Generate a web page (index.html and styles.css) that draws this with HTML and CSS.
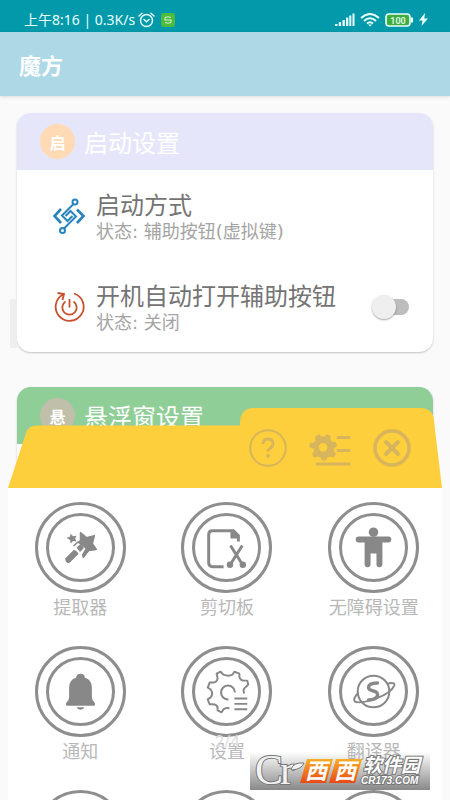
FILE: index.html
```html
<!DOCTYPE html>
<html lang="zh-CN">
<head>
<meta charset="utf-8">
<meta name="viewport" content="width=device-width, initial-scale=1">
<title>魔方</title>
<link rel="stylesheet" href="styles.css">
</head>
<body>
<div class="status-bar">
  <div class="status-left">
    <span>上午8:16 | 0.3K/s</span>
    <svg width="17" height="16" viewBox="0 0 17 16" fill="none" stroke="#e9ffff" stroke-width="1.5" stroke-linecap="round"><circle cx="8.5" cy="8.5" r="6"/><path d="M1 4 4 1.200M16 4 13 1.200M6 7.500l2.500 2.300 2.500-2.300"/></svg>
    <svg class="app-badge" width="14" height="14" viewBox="0 0 14 14"><rect width="14" height="14" rx="3" fill="#4dbb3e"/><path d="M4 4.500q3-1.500 6 0M3.500 7h7M4 9.500q3 1.500 6 0M4 4.500v2.500M10 7v2.500" fill="none" stroke="#d9f5d4"/></svg>
  </div>
  <div class="status-right">
    <svg width="20" height="14" viewBox="0 0 20 14" fill="#e9ffff"><path d="M0 11h2.500v2H0zM3.800 9h2.300v4H3.800zM7.500 7h2.300v6H7.500zM11 4.500h2.300V13H11zM14.300 2.500h2V13h-2zM17.500.500h2V13h-2z"/></svg>
    <svg width="20" height="14" viewBox="0 0 20 14" fill="none" stroke="#e9ffff" stroke-width="2"><path d="M1 5q9-8 18 0M4 8q6-5.500 12 0M7 10.500q3-2.500 6 0"/><path d="M8 11.500h4l-2 2z" fill="#e9ffff" stroke="none"/></svg>
    <svg width="29" height="14" viewBox="0 0 29 14"><rect x="1" y="1" width="24" height="12" rx="3" fill="#3fae3c" stroke="#e9ffff" stroke-width="1.600"/><path d="M27 4.500v5" stroke="#e9ffff" stroke-width="2"/><text x="13" y="10.500" class="battery-text">100</text></svg>
    <svg width="9" height="13" viewBox="0 0 9 13" fill="#e9ffff"><path d="M6 0 0 7.500h3.500L2.500 13 9 5.500H5.300z"/></svg>
  </div>
</div>
<header class="app-bar"><h1>魔方</h1></header>
<main class="content">
  <section class="card">
    <h2 class="card-head"><span class="badge">启</span>启动设置</h2>
    <div class="row">
      <svg class="row-icon" width="34" height="36" viewBox="0 0 34 36" fill="none" stroke="#2685bd" stroke-width="2"><path d="M9 11 2.500 18l6.500 7M25 11.500 31.500 18 25 25" stroke-width="2.600"/><path d="M21.500 6 10 17.500l5.500 5.500 5-5M12 30.500 24 18.500 18.500 13l-5 5"/><circle cx="23" cy="4" r="2.500"/><circle cx="10.500" cy="32.500" r="2.500"/></svg>
      <div class="row-text"><h3>启动方式</h3><p>状态: 辅助按钮(虚拟键)</p></div>
    </div>
    <div class="row">
      <svg class="row-icon" width="34" height="36" viewBox="0 0 34 36" fill="none" stroke="#c8502d" stroke-width="1.800"><path d="M22 4.500A14 14 0 1 1 11 5.500M5.500 4l6.500 1-1.500 6"/><path d="M13.500 12.500a7.200 7.200 0 1 0 8 0M17.500 10v8.500"/></svg>
      <div class="row-text"><h3><label for="autostart">开机自动打开辅助按钮</label></h3><p>状态: 关闭</p></div>
      <input class="switch" type="checkbox" id="autostart">
    </div>
  </section>
  <section class="card card-float">
    <h2 class="card-head"><span class="badge">悬</span>悬浮窗设置</h2>
    <div class="row"></div>
  </section>
</main>
<div class="edge-handle"></div>
<div class="panel">
  <div class="panel-head">
    <svg class="panel-shape" viewBox="0 0 434 80" preserveAspectRatio="none"><path d="M0 80 18 25Q20 17.500 29 17.500H232V16Q232 0 246 0H412Q423 0 425.500 9L434 80z" fill="#fecf3d"/></svg>
    <button aria-label="帮助"><svg width="38" height="38" viewBox="0 0 38 38" fill="none" stroke="#d7b55c" stroke-width="2"><circle cx="19" cy="19" r="17.800"/><path d="M14 15q0-5 5-5t5 4.500q0 3-2.500 4.500T19 22.500" stroke-width="2.800"/><circle cx="19" cy="27" r="1.900" fill="#d7b55c" stroke="none"/></svg></button>
    <button aria-label="面板设置"><svg width="44" height="38" viewBox="0 0 44 38"><path fill="#d7b55c" fill-rule="evenodd" d="m11 5 2.500 2.500h3L19 5l3.500 2 0 4 2 2 3.500 0 1 4-3 2.500v2.500l2 3.500-3 3-3.500-1-2.500 1.500-1 2.500h-4l-1.500-3-3-1-3.500 1-2-3.500 2-3-.500-2.500L1 18l1-4 4-.500 1.500-2L7 8zM15 14a4.300 4.300 0 1 0 .100 0"/><path d="M30 8.500h11M30 21.500h11M9 35h32" stroke="#d7b55c" stroke-width="3" stroke-linecap="round"/></svg></button>
    <button aria-label="关闭"><svg width="38" height="38" viewBox="0 0 38 38" fill="none" stroke="#d7b55c" stroke-width="3.500"><circle cx="19" cy="19" r="17"/><path d="m13 13 12 12M25 13 13 25" stroke-width="4" stroke-linecap="round"/></svg></button>
  </div>
  <div class="tools">
    <button class="tool"><span class="ring"><svg viewBox="0 0 92 92"><g fill="#888"><path d="m46 31 6 5 8-2-2 8 4 6-8 1-5 7-3-8-7-3 7-6z" stroke="#888" stroke-width="1.500" stroke-linejoin="round"/><path d="m36 32 2.500 2.500L42 34l-1.500 3 1.500 3-3.500-.500L36 42l-.500-3.500-3.500-2 3.500-1.500z"/><path d="M37 46l6-5 8 6-4 7-6 2z" fill="#fff"/><path d="m42 46 4-3.500 3.500 4-4 4zM30.500 57l8.500-8.500q3 0 5 4L35 61.500q-4 1-4.500-4.500z"/></g><path d="m39 44.500 5-4.500M49 54.500l5-5" stroke="#888" stroke-width="1.500"/></svg></span>提取器</button>
    <button class="tool"><span class="ring"><svg viewBox="0 0 92 92" fill="none" stroke="#888" stroke-width="3"><path d="M43 65.500H32q-4 0-4-4V33q0-4 4-4h21l5 5v6"/><path d="M50 28v9h9v-3l-6-6z" fill="#888" stroke="none"/><path d="m50 44 12 19M62 44 50 63"/><circle cx="49.500" cy="63.500" r="2.500" fill="#888" stroke-width="1.500"/><circle cx="62.500" cy="63.500" r="2.500" fill="#888" stroke-width="1.500"/></svg></span>剪切板</button>
    <button class="tool"><span class="ring"><svg viewBox="0 0 92 92" fill="#888"><circle cx="46" cy="30.500" r="4.800"/><path d="M31 35h30q3 0 3 3t-3 3h-6v22q0 3-3 3t-3-3V52h-6v11q0 3-3 3t-3-3V41h-6q-3 0-3-3t3-3z"/></svg></span>无障碍设置</button>
    <button class="tool"><span class="ring"><svg viewBox="0 0 92 92" fill="#888"><path d="M46 28q4 0 4.500 4 7 2 7 10v10q0 3 3 5.500 1 3-2 3h-25q-3 0-2-3 3-2.500 3-5.500V42q0-8 7-10 .500-4 4.500-4zM42 62h8q-1 2.500-4 2.500T42 62z"/></svg></span>通知</button>
    <button class="tool"><span class="ring"><svg viewBox="0 0 92 92" fill="none" stroke="#888" stroke-width="2"><path d="M49 63q-4-1-6 1l-2 3-4-2v-3q-1-3-5-3h-3l-2-5 3-2q3-4 0-8l-3-2 2-5h4q4-1 4-5l-1-4 4-2 3 3q5 2 9 0l2-3 5 2v3q1 4 5 4h3l1 4-3 3q-3 2-1 6" stroke-linejoin="round"/><path d="M48 54a7 7 0 1 1 6.500-7"/><path d="M54 53h13M54 58.500h13M54 64h13"/></svg></span>设置</button>
    <button class="tool"><span class="ring"><svg viewBox="0 0 92 92" fill="none" stroke="#888" stroke-width="2"><circle cx="46" cy="46" r="16"/><path d="M60 38q8-2 7 2-3 7-18 13-17 6-22 3-2-3 4-9"/><path d="M50 37.500q-9 0-9 4.500 0 2.500 5 3.500t4 5q-2 4-9 4" stroke-width="3.500" stroke-linecap="round"/></svg></span>翻译器</button>
    <button class="tool" aria-label="更多"><span class="ring"></span></button>
    <button class="tool" aria-label="更多"><span class="ring"></span></button>
    <button class="tool" aria-label="更多"><span class="ring"></span></button>
  </div>
  <span class="page-count">2/4</span>
</div>
<div class="watermark">
  <svg width="180" height="38" viewBox="0 0 180 38">
    <defs><linearGradient id="orange" x2="0" y2="1"><stop stop-color="#f9ae24"/><stop offset="1" stop-color="#e84915"/></linearGradient></defs>
    <text x="5" y="32" class="mark-cr">C</text><text x="30" y="32" class="mark-cr">r</text>
    <path d="M41 17q3-7 13-6-2 6-12 7z" fill="#f2f2f2" stroke="#777"/>
    <path d="M57 7h26l-7 24H50zM86 7h26l-7 24H79z" fill="url(#orange)"/>
    <text x="55" y="27" class="mark-xx">西</text><text x="84" y="27" class="mark-xx">西</text>
    <text x="113" y="20" class="mark-name">软件园</text>
    <text x="111" y="32" class="mark-url">CR173.COM</text>
  </svg>
</div>
</body>
</html>
```
FILE: styles.css
```css
* { box-sizing: border-box; margin: 0; }
body {
  position: relative;
  height: 100vh;
  overflow: hidden;
  background: #fafafa;
  font-family: "Noto Sans CJK SC", sans-serif;
  color: #777;
}
button { border: 0; padding: 0; background: none; font: inherit; color: inherit; }
svg { display: block; flex: none; }

.status-bar {
  display: flex;
  justify-content: space-between;
  height: 32px;
  padding: 7px 22px 0 24px;
  background: #0299aa;
  color: #e9ffff;
}
.status-left, .status-right { display: flex; align-items: center; height: 25px; }
.status-left { gap: 3px; font: 14px/25px "Noto Sans", "Noto Sans CJK SC", sans-serif; }
.app-badge { margin-left: 3px; }
.status-right { gap: 5px; }
.battery-text { font: 500 9px Roboto, sans-serif; fill: #e9ffff; text-anchor: middle; }

.app-bar {
  display: flex;
  align-items: center;
  height: 64px;
  padding: 0 19px;
  background: #add8e6;
  box-shadow: 0 1px 3px rgba(0, 0, 0, .12);
}
.app-bar h1 { font-size: 22px; font-weight: 700; color: #fff; }

.content { display: flex; flex-direction: column; gap: 35px; padding: 17px; }
.card {
  border-radius: 14px;
  background: #fff;
  overflow: hidden;
  box-shadow: 0 1px 2px rgba(0, 0, 0, .22);
}
.card-head {
  display: flex;
  align-items: center;
  gap: 9px;
  height: 57px;
  padding-left: 23px;
  background: #e6e6fa;
  font-size: 24px;
  font-weight: 400;
  color: #fff;
}
.badge {
  display: grid;
  place-items: center;
  width: 35px;
  height: 35px;
  border-radius: 50%;
  background: #ffdab5;
  font-size: 16px;
  font-weight: 700;
}
.card-float .card-head { background: #90ce98; }
.card-float .badge { background: #bfbfaa; }
.row { display: flex; align-items: center; gap: 10px; height: 91px; padding: 0 24px 0 35px; }
.row-text { flex: 1; padding-top: 2px; white-space: nowrap; }
.row-text h3 { font-size: 24px; line-height: 30px; font-weight: 400; color: #747474; }
.row-text p { font: 18px/26px "DejaVu Sans", "Noto Sans CJK SC", sans-serif; color: #a4a4a4; }
.switch {
  appearance: none;
  position: relative;
  width: 37px;
  height: 24px;
  margin: 0;
}
.switch::before {
  content: "";
  position: absolute;
  inset: 4px 0 4px 4px;
  border-radius: 8px;
  background: #bdbdbd;
}
.switch::after {
  content: "";
  position: absolute;
  left: 0;
  top: 0;
  width: 24px;
  height: 24px;
  border-radius: 50%;
  background: #efefef;
  box-shadow: 0 1px 2px rgba(0, 0, 0, .35);
}

.edge-handle { position: absolute; left: 10px; top: 299px; width: 7px; height: 49px; background: #eee; }

.panel { position: absolute; left: 8px; right: 8px; top: 408px; bottom: 0; overflow: hidden; }
.panel-head {
  position: relative;
  display: flex;
  justify-content: flex-end;
  align-items: center;
  gap: 21px;
  height: 80px;
  padding-right: 31px;
}
.panel-head button { position: relative; }
.panel-shape { position: absolute; inset: 0; width: 100%; height: 100%; }
.tools {
  display: grid;
  grid-template-columns: repeat(3, 1fr);
  grid-auto-rows: 144px;
  height: 100%;
  padding-top: 14px;
  margin: 0 -5px 0 -1px;
  background: #fff;
}
.tool {
  display: flex;
  flex-direction: column;
  align-items: center;
  font-size: 18px;
  line-height: 26px;
  color: #b8b8b8;
}
.ring {
  position: relative;
  width: 91px;
  height: 91px;
  border: 3px solid #8e8e8e;
  border-radius: 50%;
}
.ring::before {
  content: "";
  position: absolute;
  inset: 8px;
  border: 3px solid #8e8e8e;
  border-radius: 50%;
}
.ring svg { margin: -3px; width: 91px; height: 91px; }
.page-count { position: absolute; left: 207px; top: 322px; font: 16px/24px Roboto, sans-serif; color: #ddd; }

.watermark {
  position: absolute;
  right: 20px;
  bottom: 10px;
  background: linear-gradient(rgba(150, 150, 150, 0), #888);
}
.watermark svg { overflow: visible; }
.mark-cr { font: 42px "Liberation Serif", serif; fill: #f2f2f2; stroke: #777; stroke-width: 2px; paint-order: stroke; }
.mark-xx { font: italic 700 22px "Noto Sans CJK SC", sans-serif; fill: #fff; }
.mark-name { font: italic 700 19px "Noto Sans CJK SC", sans-serif; fill: #fff; stroke: #777; stroke-width: 2px; paint-order: stroke; }
.mark-url { font: italic 700 10px "Liberation Sans", sans-serif; fill: #fff; stroke: #777; stroke-width: 2px; paint-order: stroke; }
```
